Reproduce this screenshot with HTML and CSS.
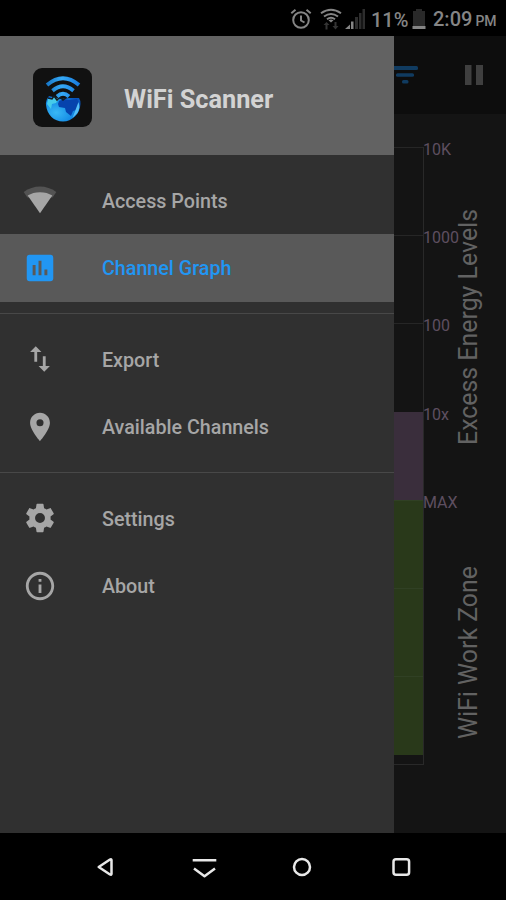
FILE: index.html
```html
<!DOCTYPE html>
<html lang="en">
<head>
<meta charset="utf-8">
<title>WiFi Scanner</title>
<link rel="stylesheet" href="styles.css">
</head>
<body>
<header class="status">
  <svg class="st-alarm" width="22" height="22" viewBox="0 0 22 22" fill="none" stroke="#858585" stroke-width="2"><circle cx="11" cy="12" r="7.8"/><path d="M11 7.500v5l3.500 2M1.300 5.200 5.500 1.700M20.700 5.200l-4.200-3.500"/></svg>
  <svg class="st-wifi" width="22" height="23" viewBox="0 0 22 23"><g fill="none" stroke="#858585" stroke-width="2"><path d="M1 5.300Q11-1.800 21 5.300M4 8.500q7-5 14 0M7 11.200q4-3 8 0"/></g><path d="m8.500 12.300 2.500 2.200 2.500-2.200q-2.500-1.600-5 0z" fill="#858585"/><path d="m3.500 17 3-3 3 3H7.500v4.500h-2V17zM12.500 18h2v-4h2v4h2l-3 3.500z" fill="#343434"/></svg>
  <svg class="st-signal" width="21" height="22" viewBox="0 0 21 22"><path d="M0 21 5 16.500V21zM6 13.500h2.500V21H6z" fill="#858585"/><path d="M10 9h3v12h-3zM14 5h2.500v16H14zM17.500 1H20v20h-2.500z" fill="#2d2d2d"/></svg>
  <span class="st-pct">11%</span>
  <svg class="st-batt" width="14" height="22" viewBox="0 0 14 22"><path d="M4 1h6v2h3v15H1V3h3z" fill="#292929"/><path d="M.5 18h13v3H.5z" fill="#858585"/></svg>
  <span class="st-time">2:09<small>PM</small></span>
</header>
<main class="screen">
  <aside class="drawer">
    <div class="brand">
      <div class="logo">
        <svg width="59" height="59" viewBox="0 0 59 59">
          <defs>
            <radialGradient id="globe" cx=".3" cy=".65" r=".75"><stop offset="0" stop-color="#39b8f5"/><stop offset=".6" stop-color="#168ee6"/><stop offset="1" stop-color="#0755be"/></radialGradient>
            <linearGradient id="waves" gradientUnits="userSpaceOnUse" x1="13" x2="48" y1="0" y2="0"><stop offset="0" stop-color="#1674c5"/><stop offset=".45" stop-color="#35a9f6"/><stop offset="1" stop-color="#1576dc"/></linearGradient>
          </defs>
          <path d="M16 28q-3.500 4-3 9C14 47 21 53.500 30 53.500S47 46 47.500 36q0-4-1.500-6H36l-8 1z" fill="url(#globe)"/>
          <path d="m26 33 5-2 5 1 8-1 2 4-3 7-3 1-2 5-5-4-1-4-6-1-1-3z" fill="#0643ad"/>
          <path d="M45.500 34q2 6-1 11l-5 5 3-8z" fill="#55bff5"/>
          <path d="m15 31 6-2 5 2-3 4-4 1-1 5-4-5z" fill="#45cbea"/>
          <path d="m15 30 4 1 2-3 3 4 3-3 3 3 4-3" fill="none" stroke="#111c25" stroke-width="1.500"/>
          <g fill="none" stroke="url(#waves)" stroke-width="3.800"><path d="M14 17q16-13.500 32 0M19.500 22.800q10.500-9 21 0M24 28.500q6-5.500 12 0"/></g>
        </svg>
      </div>
      <h1>WiFi Scanner</h1>
    </div>
    <nav>
      <ul class="group">
        <li class="item"><svg class="icon" viewBox="0 0 24 24"><path d="M23.500 6.300C20 3.900 16 2.500 12 2.500S4 3.900.5 6.300l2.600 3.900h17.800z" opacity=".3"/><path d="M12 21.300 20.700 8.900Q17 6.500 12 6.500T3.300 8.900z"/></svg><span>Access Points</span></li>
        <li class="item active"><svg class="icon" viewBox="0 0 24 24"><path d="M19 3H5a2 2 0 0 0-2 2v14a2 2 0 0 0 2 2h14a2 2 0 0 0 2-2V5a2 2 0 0 0-2-2zM9 17H7v-7h2v7zm4 0h-2V7h2v10zm4 0h-2v-4h2v4z" transform="translate(-.480 -.480) scale(1.040)"/></svg><span>Channel Graph</span></li>
      </ul>
      <ul class="group">
        <li class="item"><svg class="icon" viewBox="0 0 24 24"><path d="M16 17.010V10h-2v7.010h-3L15 21l4-3.990h-3zM9 3 5 6.990h3V14h2V6.990h3L9 3z"/></svg><span>Export</span></li>
        <li class="item"><svg class="icon" viewBox="0 0 24 24"><path d="M12 2C8.130 2 5 5.130 5 9c0 5.250 7 13 7 13s7-7.750 7-13c0-3.870-3.130-7-7-7zm0 9.500a2.500 2.500 0 0 1 0-5 2.500 2.500 0 0 1 0 5z"/></svg><span>Available Channels</span></li>
      </ul>
      <ul class="group">
        <li class="item"><svg class="icon" viewBox="0 0 24 24"><path d="M19.430 12.980c.04-.32.07-.64.07-.98s-.03-.66-.07-.98l2.110-1.650c.19-.15.24-.42.12-.64l-2-3.460c-.12-.22-.39-.3-.61-.22l-2.490 1c-.52-.4-1.080-.73-1.690-.98l-.38-2.650A.488.488 0 0 0 14 2h-4c-.25 0-.46.18-.49.42l-.38 2.650c-.61.25-1.170.59-1.690.98l-2.490-1c-.23-.09-.49 0-.61.22l-2 3.460c-.13.22-.07.49.12.64l2.110 1.650c-.04.32-.07.65-.07.98s.03.66.07.98l-2.110 1.650c-.19.15-.24.42-.12.64l2 3.460c.12.22.39.3.61.22l2.490-1c.52.4 1.080.73 1.690.98l.38 2.650c.03.24.24.42.49.42h4c.25 0 .46-.18.49-.42l.38-2.650c.61-.25 1.170-.59 1.690-.98l2.490 1c.23.09.49 0 .61-.22l2-3.460c.12-.22.07-.49-.12-.64l-2.110-1.650zM12 15.500a3.500 3.500 0 1 1 0-7 3.500 3.500 0 0 1 0 7z"/></svg><span>Settings</span></li>
        <li class="item"><svg class="icon" viewBox="0 0 24 24"><path d="M11 17h2v-6h-2v6zm1-15C6.480 2 2 6.480 2 12s4.480 10 10 10 10-4.480 10-10S17.520 2 12 2zm0 18c-4.410 0-8-3.590-8-8s3.590-8 8-8 8 3.590 8 8-3.590 8-8 8zM11 9h2V7h-2v2z"/></svg><span>About</span></li>
      </ul>
    </nav>
  </aside>
  <section class="content">
    <div class="toolbar">
      <svg width="24" height="20" viewBox="0 0 24 20" fill="#103b60"><rect x="-4" y="1" width="28" height="4" rx="1.500"/><rect x="2" y="8.300" width="18" height="3.500" rx="1.500"/><rect x="8" y="15" width="6.500" height="3.500" rx="1.500"/></svg>
      <svg class="pause" width="18" height="20" viewBox="0 0 18 20" fill="#3f3f3f"><path d="M0 0h6.500v20H0zM11 0h7v20h-7z"/></svg>
    </div>
    <div class="chart">
      <div class="plot">
        <div class="cell"></div><div class="cell"></div><div class="cell"></div>
        <div class="cell excess"></div>
        <div class="cell work"></div><div class="cell work"></div><div class="cell work last"></div>
      </div>
      <div class="scale"><span>10K</span><span>1000</span><span>100</span><span>10x</span><span>MAX</span></div>
      <div class="zones"><span class="z-energy">Excess Energy Levels</span><span class="z-work">WiFi Work Zone</span></div>
    </div>
  </section>
</main>
<footer class="sysnav">
  <svg viewBox="0 0 28 24"><path d="M6.200 12 17.500 4.500q1.500-.8 1.500.8v13.400q0 1.600-1.500.8z" transform="translate(1.500 0)"/></svg>
  <svg viewBox="0 0 28 24"><path d="M2.700 5.300h23.600M4 13.500 14.500 21.200 25 13.500"/></svg>
  <svg viewBox="0 0 28 24"><circle cx="14" cy="12" r="8"/></svg>
  <svg viewBox="0 0 28 24"><rect x="6.500" y="4.200" width="15.600" height="15.600" rx="2.500"/></svg>
</footer>
</body>
</html>
```
FILE: styles.css
```css
* { box-sizing: border-box; }
body {
  margin: 0;
  width: 506px;
  height: 900px;
  display: flex;
  flex-direction: column;
  background: #000;
  color: #a6a6a6;
  font-family: Roboto, "Liberation Sans", sans-serif;
  overflow: hidden;
}
svg { display: block; flex: none; }
ul { list-style: none; margin: 0; padding: 0; }

.status {
  height: 36px;
  flex: none;
  display: flex;
  align-items: center;
  padding: 2px 11px 0 290px;
  color: #858585;
  font-size: 20px;
  font-weight: 500;
  line-height: 24px;
  white-space: nowrap;
}
.st-wifi { margin-left: 8px; }
.st-signal { margin-left: 3px; }
.st-pct { width: 36px; margin-left: 5px; padding-top: 1px; }
.st-batt { margin-left: 5px; }
.st-time { margin-left: 7px; padding-top: 1px; }
.st-time small { margin-left: 3px; font-size: 14px; }

.screen { flex: 1; display: flex; min-height: 0; }

.drawer { width: 394px; flex: none; background: #303030; }
.brand {
  height: 119px;
  display: flex;
  align-items: center;
  padding: 4px 0 0 33px;
  background: #626262;
}
.logo {
  width: 59px;
  height: 59px;
  border-radius: 9px;
  background: #111;
  overflow: hidden;
}
.brand h1 {
  margin: 3px 0 0 32px;
  color: #d3d3d3;
  font-size: 25.300px;
  font-weight: 700;
  white-space: nowrap;
}
.group { padding: 11.500px 0; }
.group + .group { border-top: 1.500px solid #484848; }
.item {
  height: 67.500px;
  display: flex;
  align-items: center;
  padding-left: 23px;
  font-size: 19.700px;
  font-weight: 500;
  white-space: nowrap;
}
.item span { padding-top: 2px; }
.item.active { background: #595959; color: #2196f3; }
.icon { width: 34px; height: 34px; margin-right: 45px; fill: currentColor; }

.content { flex: 1; display: flex; flex-direction: column; background: #141414; }
.toolbar {
  height: 78px;
  display: flex;
  align-items: center;
  padding-right: 23px;
  justify-content: space-between;
  background: #0d0d0d;
}
.chart { flex: 1; display: flex; padding-top: 33px; }
.plot {
  width: 30px;
  height: 618px;
  border-right: 1px solid #292929;
  border-bottom: 1px solid #292929;
}
.cell { height: 88.200px; border-top: 1px solid #262626; }
.excess { background: #3a2e3c; border-color: #3a2e3c; }
.work { background: #29391a; border-color: #304024; }
.work.last { height: 79px; }
.scale {
  width: 34px;
  margin-top: -7px;
  color: #5e4f60;
  font-size: 16px;
  line-height: 19px;
}
.scale span { display: block; height: 88.200px; margin-left: -1px; }
.zones {
  width: 30px;
  height: 530px;
  display: flex;
  flex-direction: column;
  justify-content: space-between;
  margin-top: 62px;
  margin-left: -4px;
  color: #626262;
  font-size: 24.900px;
  line-height: 30px;
}
.zones span { writing-mode: vertical-rl; transform: rotate(180deg); white-space: nowrap; }

.sysnav {
  height: 67px;
  flex: none;
  display: flex;
  align-items: center;
  justify-content: space-between;
  padding: 0 91px 0 91px;
}
.sysnav svg { width: 28px; height: 24px; fill: none; stroke: #e8e8e8; stroke-width: 2.500; stroke-linejoin: round; }
```
